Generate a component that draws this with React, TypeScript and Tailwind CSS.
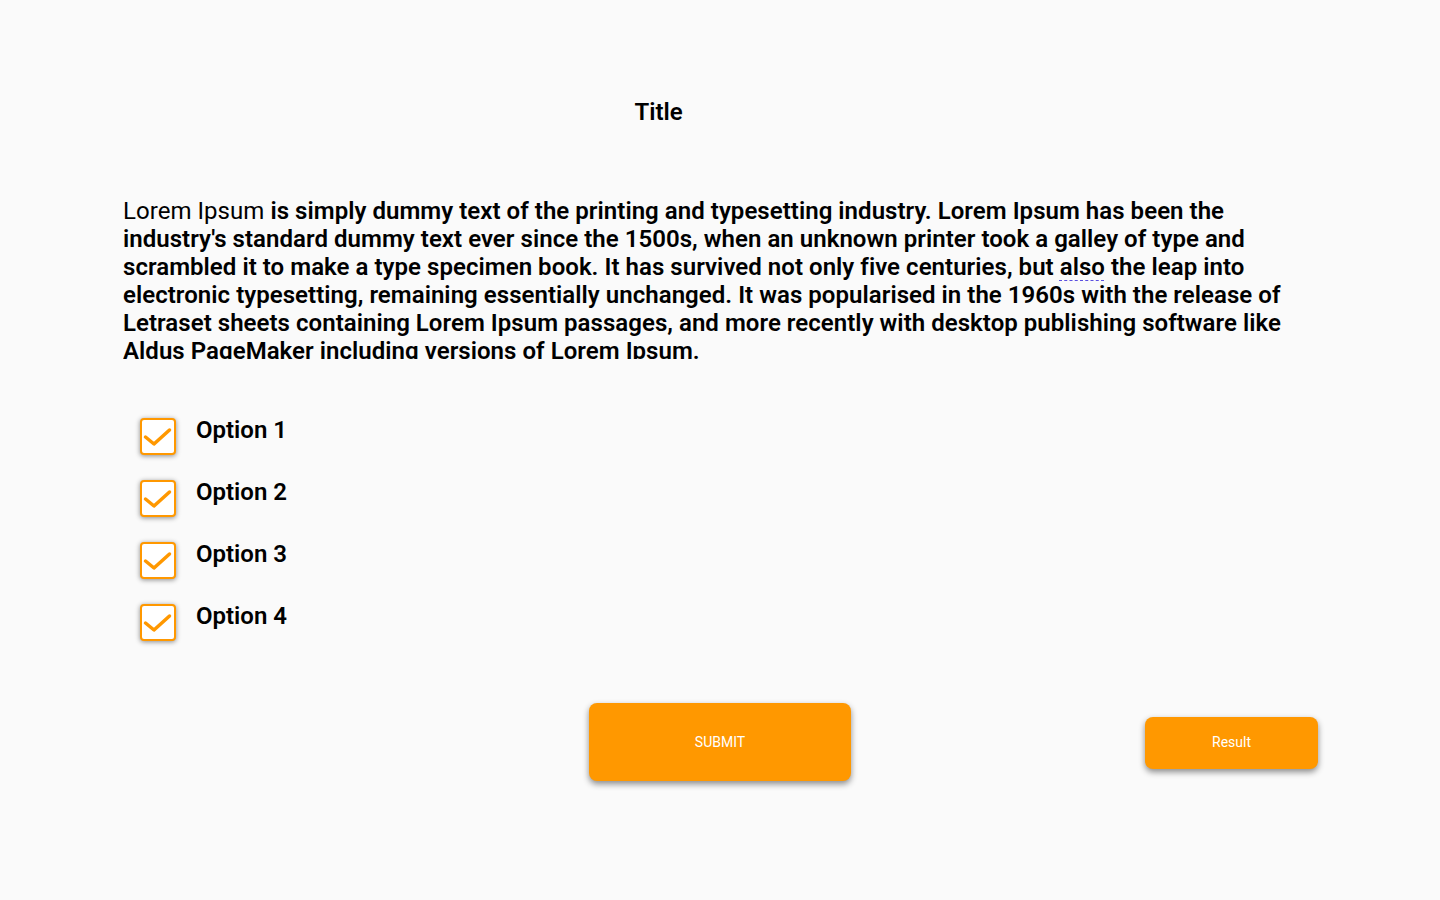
import React from "react";

function Check() {
  return (
    <div className="w-[36px] h-[37px] shrink-0 rounded-[4px] border-2 border-[#ff9800] bg-white shadow-[0_1px_5px_rgba(0,0,0,0.45)] flex items-center justify-center">
      <svg width="32" height="33" viewBox="2 2 32 33" fill="none">
        <path d="M5.5 19 L14 26 L29.5 12" stroke="#ff9800" strokeWidth="3.5" strokeLinecap="round" strokeLinejoin="round" />
      </svg>
    </div>
  );
}

export default function App() {
  const options = ["Option 1", "Option 2", "Option 3", "Option 4"];
  return (
    <div
      className="min-h-[900px] w-full bg-[#fafafa] text-black px-[123px]"
      style={{ fontFamily: "Roboto, 'Liberation Sans', sans-serif" }}
    >
      <div className="pt-[98px] w-[1071px] text-center text-[24px] leading-[28px] font-semibold">Title</div>
      <div className="mt-[71px] h-[162px] overflow-hidden text-[24px] leading-[28px] font-semibold tracking-[0.045px]">
        <span className="font-normal">Lorem Ipsum</span> is simply dummy text of the printing and typesetting industry. Lorem Ipsum has been the industry's standard dummy text ever since the 1500s, when an unknown printer took a galley of type and scrambled it to make a type specimen book. It has survived not only five centuries, but{" "}
        <span className="underline decoration-dashed decoration-1 decoration-[#5b4fe0] underline-offset-[5px]">also</span> the leap into electronic typesetting, remaining essentially unchanged. It was popularised in the 1960s with the release of Letraset sheets containing Lorem Ipsum passages, and more recently with desktop publishing software like Aldus PageMaker including versions of Lorem Ipsum.
      </div>
      <div className="mt-[59px] flex flex-col gap-[25px] pl-[17px]">
        {options.map((o) => (
          <div key={o} className="flex items-start gap-[20px]">
            <Check />
            <span className="text-[24px] leading-[24px] font-semibold">{o}</span>
          </div>
        ))}
      </div>
      <div className="mt-[62px] grid grid-cols-[1fr_auto_1fr] items-center">
        <div />
        <button className="w-[262px] h-[78px] rounded-[8px] bg-[#ff9800] text-white text-[14px] shadow-[0_3px_6px_rgba(0,0,0,0.45)]">
          SUBMIT
        </button>
        <div className="flex justify-end">
          <button className="w-[173px] h-[52px] rounded-[8px] bg-[#ff9800] text-white text-[14px] shadow-[0_3px_6px_rgba(0,0,0,0.45)] mr-[-1px] mt-[1px]">
            Result
          </button>
        </div>
      </div>
    </div>
  );
}
